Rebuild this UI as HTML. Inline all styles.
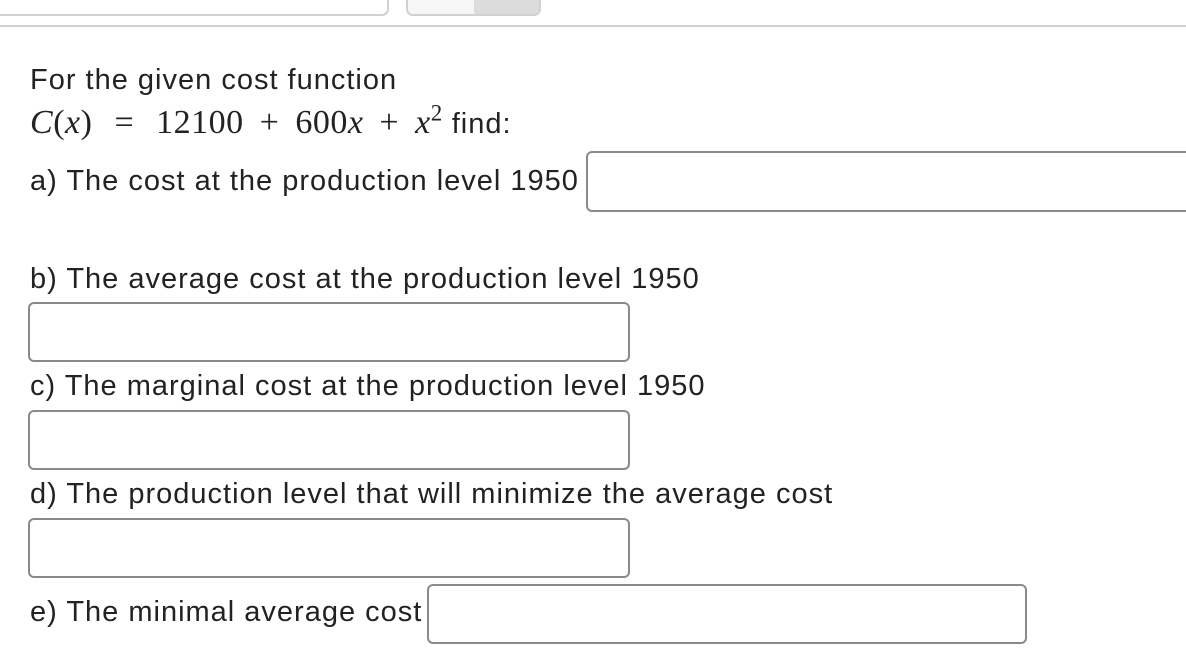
<!DOCTYPE html>
<html><head><style>
body{margin:0;width:1186px;height:672px;position:relative;background:#fff;overflow:hidden;font-family:"Liberation Sans",sans-serif;color:#222;}
.t{position:absolute;left:30px;font-size:29px;letter-spacing:1px;white-space:nowrap;line-height:30px;}
.in{position:absolute;border:2px solid #8a8a8a;border-radius:6px;box-sizing:border-box;background:#fff;}
.m{font-family:"Liberation Serif",serif;font-size:34px;letter-spacing:0.5px;}
.i{font-style:italic;}
.o{margin:0 16px;}
</style></head><body>
<div style="position:absolute;left:-10px;top:-10px;width:399px;height:26px;border:2px solid #d0d0d0;border-radius:7px;box-sizing:border-box"></div>
<div style="position:absolute;left:406px;top:-10px;width:135px;height:26px;border:2px solid #d0d0d0;border-radius:7px;box-sizing:border-box;background:linear-gradient(90deg,#f6f6f6 0,#f6f6f6 66px,#dcdcdc 66px)"></div>
<div style="position:absolute;left:0;top:25px;width:1186px;height:2px;background:#cfcfcf"></div>
<div class="t" style="top:65px">For the given cost function</div>
<div class="t" style="top:108px"><span class="m"><span class="i">C</span>(<span class="i">x</span>)<span class="o" style="margin:0 22px 0 22px">=</span>12100<span class="o">+</span>600<span class="i">x</span><span class="o">+</span><span class="i">x</span><sup style="font-size:23px;line-height:0">2</sup></span> find:</div>
<div class="t" style="top:166px">a) The cost at the production level 1950</div>
<div class="in" style="left:586px;top:151px;width:610px;height:61px"></div>
<div class="t" style="top:264px">b) The average cost at the production level 1950</div>
<div class="in" style="left:28px;top:302px;width:602px;height:60px"></div>
<div class="t" style="top:371px">c) The marginal cost at the production level 1950</div>
<div class="in" style="left:28px;top:410px;width:602px;height:60px"></div>
<div class="t" style="top:479px">d) The production level that will minimize the average cost</div>
<div class="in" style="left:28px;top:518px;width:602px;height:60px"></div>
<div class="t" style="top:597px">e) The minimal average cost</div>
<div class="in" style="left:427px;top:584px;width:600px;height:60px"></div>
</body></html>
